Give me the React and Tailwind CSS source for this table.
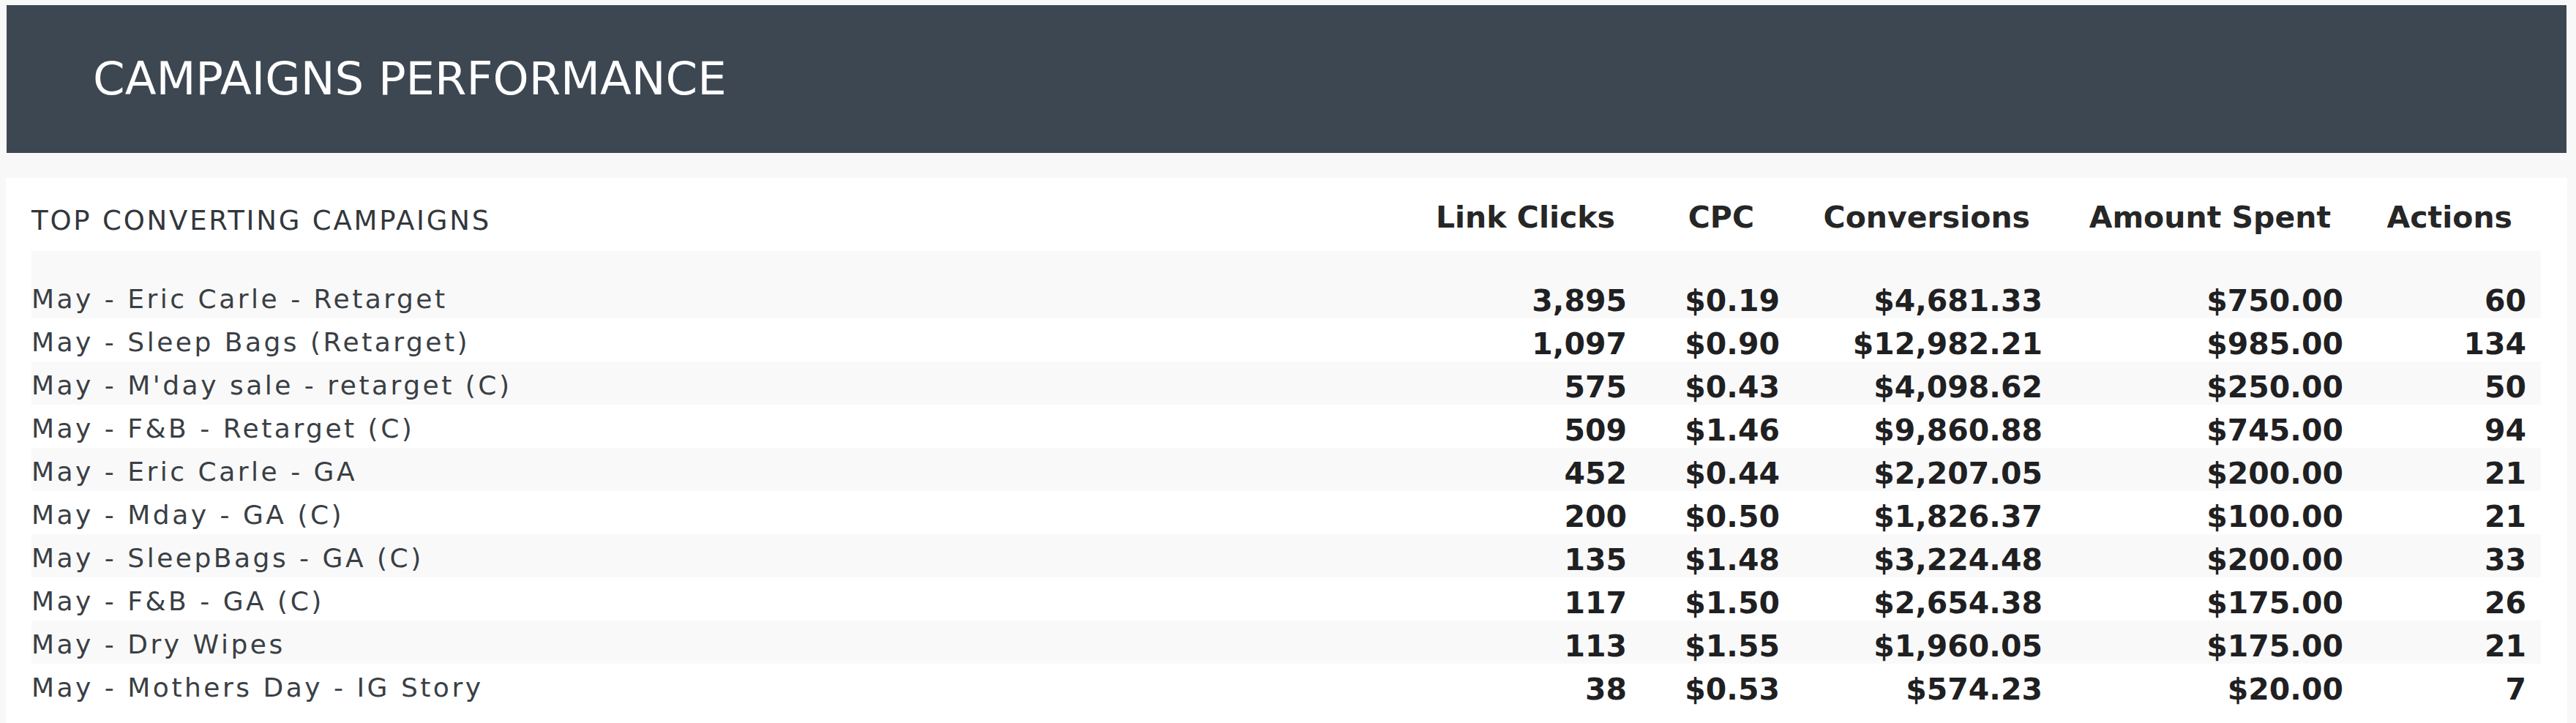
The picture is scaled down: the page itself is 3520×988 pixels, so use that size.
import React from "react";

const rows = [
  { name: "May - Eric Carle - Retarget", clicks: "3,895", cpc: "$0.19", conv: "$4,681.33", spent: "$750.00", actions: "60" },
  { name: "May - Sleep Bags (Retarget)", clicks: "1,097", cpc: "$0.90", conv: "$12,982.21", spent: "$985.00", actions: "134" },
  { name: "May - M'day sale - retarget (C)", clicks: "575", cpc: "$0.43", conv: "$4,098.62", spent: "$250.00", actions: "50" },
  { name: "May - F&B - Retarget (C)", clicks: "509", cpc: "$1.46", conv: "$9,860.88", spent: "$745.00", actions: "94" },
  { name: "May - Eric Carle - GA", clicks: "452", cpc: "$0.44", conv: "$2,207.05", spent: "$200.00", actions: "21" },
  { name: "May - Mday - GA (C)", clicks: "200", cpc: "$0.50", conv: "$1,826.37", spent: "$100.00", actions: "21" },
  { name: "May - SleepBags - GA (C)", clicks: "135", cpc: "$1.48", conv: "$3,224.48", spent: "$200.00", actions: "33" },
  { name: "May - F&B - GA (C)", clicks: "117", cpc: "$1.50", conv: "$2,654.38", spent: "$175.00", actions: "26" },
  { name: "May - Dry Wipes", clicks: "113", cpc: "$1.55", conv: "$1,960.05", spent: "$175.00", actions: "21" },
  { name: "May - Mothers Day - IG Story", clicks: "38", cpc: "$0.53", conv: "$574.23", spent: "$20.00", actions: "7" },
];

const cols = "grid grid-cols-[1fr_200px_209px_359px_411px_270px]";

const App = () => {
  return (
    <div className="h-[988px] overflow-hidden bg-[#f8f8f8] pt-[7px] pl-[8px] pr-[12px] flex flex-col font-['DejaVu_Sans',sans-serif]">
      {/* Header */}
      <div className="h-[202px] ml-[1px] mr-[1px] bg-[#3d4752] flex items-center pl-[118px] shrink-0">
        <h1 className="text-[62.5px] text-white font-normal leading-none">CAMPAIGNS PERFORMANCE</h1>
      </div>

      {/* Table card */}
      <div className="mt-[34px] flex-1 bg-white pl-[35px] pr-[36px] pt-[17px]">
        <div className={`${cols} h-[83px] items-center text-[#262626]`}>
          <div className="text-[37px] tracking-[2.8px] text-[#33373b] whitespace-nowrap">TOP CONVERTING CAMPAIGNS</div>
          <Head pad="pr-[16px]">Link Clicks</Head>
          <Head pad="pr-[35px]">CPC</Head>
          <Head pad="pr-[17px]">Conversions</Head>
          <Head pad="pr-[17px]">Amount Spent</Head>
          <Head pad="pr-[39px]">Actions</Head>
        </div>

        {rows.map((r, i) => (
          <div
            key={r.name}
            className={`${cols} items-center ${i === 0 ? "h-[92px] pt-[33px]" : "h-[59px]"} ${i % 2 === 0 ? "bg-[#f9f9f9]" : "bg-white"}`}
          >
            <div className="text-[36px] tracking-[3.5px] text-[#3a3f45] whitespace-nowrap">{r.name}</div>
            <Num>{r.clicks}</Num>
            <Num>{r.cpc}</Num>
            <Num>{r.conv}</Num>
            <Num>{r.spent}</Num>
            <Num last>{r.actions}</Num>
          </div>
        ))}
      </div>
    </div>
  );
};

const Head = ({ children, pad }) => (
  <div className={`flex justify-end whitespace-nowrap text-[41px] font-bold pb-[8px] ${pad}`}>{children}</div>
);

const Num = ({ children, last }) => (
  <div className={`text-right text-[41px] font-bold text-[#1f2022] pt-[5px] ${last ? "pr-[20px]" : ""}`}>{children}</div>
);

export default App;
